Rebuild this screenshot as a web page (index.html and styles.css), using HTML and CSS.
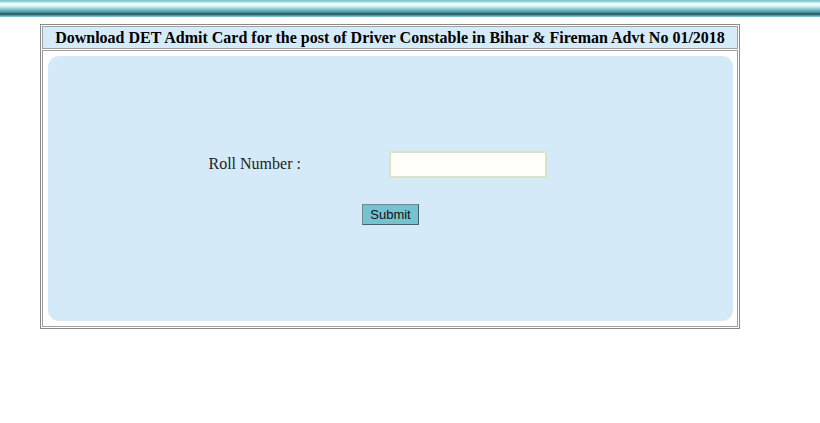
FILE: index.html
```html
<!DOCTYPE html>
<html>
<head>
<meta charset="utf-8">
<link rel="stylesheet" href="styles.css">
</head>
<body>
<div class="topbar"></div>
<div class="frame">
  <div class="head">Download DET Admit Card for the post of Driver Constable in Bihar &amp; Fireman Advt No 01/2018</div>
  <div class="cell">
    <div class="panel">
      <div class="row">
        <span class="label">Roll Number :</span>
        <input class="field" type="text">
      </div>
      <button class="submit" type="button">Submit</button>
    </div>
  </div>
</div>
</body>
</html>
```
FILE: styles.css
```css
html, body {
  margin: 0;
  padding: 0;
  background: #ffffff;
  font-family: "Liberation Serif", "Times New Roman", serif;
}
.topbar {
  height: 17px;
  background: linear-gradient(to bottom,
    #7ec5cd 0px, #9fd6dc 2px, #eaf8f8 3px, #f4fbfb 5px, #c9e9ec 7px,
    #8ccbd4 9px, #5fa9b6 11px, #3d7f8c 13px, #21525d 14px, #3b7c88 15px,
    #6fb9c4 16px, #84c7cf 17px);
}
.frame {
  width: 696px;
  margin: 7px 0 0 40px;
  border: 1px solid #8a8a8a;
  padding: 1px;
}
.head {
  height: 21px;
  border: 1px solid #a0a0a0;
  background: #d6ebf8;
  color: #000;
  font-weight: bold;
  font-size: 16px;
  line-height: 21px;
  text-align: center;
  white-space: nowrap;
}
.cell {
  margin-top: 1px;
  border: 1px solid #a0a0a0;
  padding: 5px 4px 5px 5px;
  background: #ffffff;
}
.panel {
  height: 265px;
  background: #d4eaf8;
  border-radius: 11px;
  display: flex;
  flex-direction: column;
  align-items: center;
  justify-content: center;
  gap: 26px;
  padding-bottom: 2px;
  box-sizing: border-box;
}
.row {
  display: grid;
  grid-template-columns: 180px 180px;
  align-items: center;
}
.label {
  font-size: 16px;
  color: #222;
  margin-left: -2px;
}
.field {
  width: 158px;
  height: 27px;
  box-sizing: border-box;
  border: 2px solid #d9e3cb;
  background: #fffff9;
  margin: 0 0 0 -2px;
  padding: 0;
}
.submit {
  width: 57px;
  height: 21px;
  margin: 0;
  padding: 0;
  background: #73c3d0;
  border: 1px solid #6f8c93;
  border-right-color: #4b5f64;
  border-bottom-color: #4b5f64;
  font-family: "Liberation Sans", Arial, sans-serif;
  font-size: 13px;
  color: #111;
}
```
